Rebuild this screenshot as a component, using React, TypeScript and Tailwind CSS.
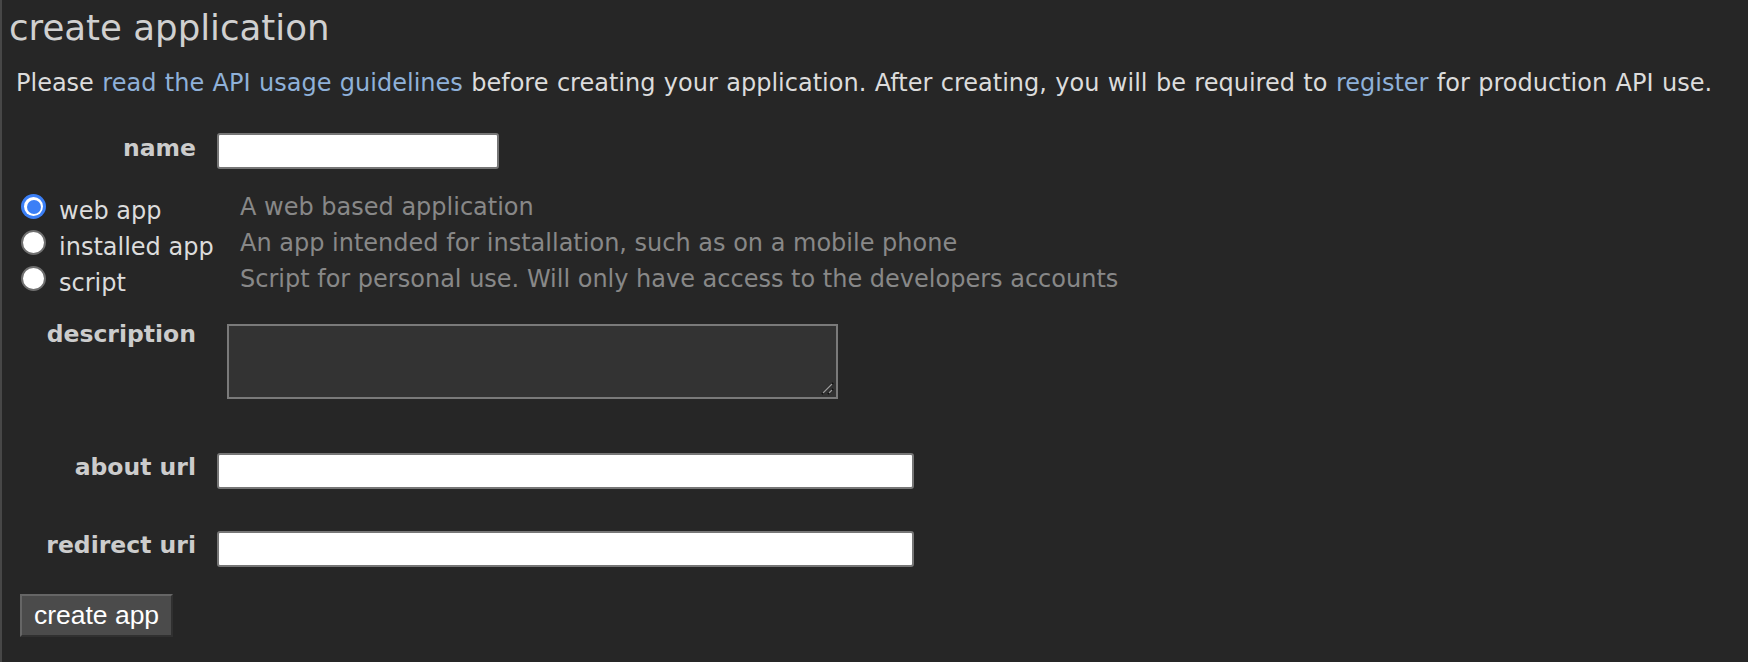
import React from "react";

function Radio({ checked }: { checked?: boolean }) {
  if (checked) {
    return (
      <div className="mt-[3px] flex h-[25px] w-[25px] shrink-0 items-center justify-center rounded-full bg-[#3b7ff6]">
        <div className="flex h-[19px] w-[19px] items-center justify-center rounded-full bg-white">
          <div className="h-[14px] w-[14px] rounded-full bg-[#3b7ff6]" />
        </div>
      </div>
    );
  }
  return <div className="mt-[3px] h-[25px] w-[25px] shrink-0 rounded-full border-2 border-[#6f6f6f] bg-white" />;
}

const kinds = [
  { label: "web app", desc: "A web based application", checked: true },
  { label: "installed app", desc: "An app intended for installation, such as on a mobile phone" },
  { label: "script", desc: "Script for personal use. Will only have access to the developers accounts" },
];

export default function App() {
  return (
    <div className="min-h-screen border-l-2 border-[#474747] bg-[#262626] font-['DejaVu_Sans',sans-serif] text-[#dcdcdc]">
      <h1 className="pl-[7px] pt-[7px] text-[35.6px] font-normal leading-[42px] text-[#d0d0d0]">create application</h1>
      <p className="mt-[19px] pl-[14px] text-[24px] leading-[30px] [word-spacing:0.8px]">
        Please <a className="text-[#8fb1d9]">read the API usage guidelines</a> before creating your application. After
        creating, you will be required to <a className="text-[#8fb1d9]">register</a> for production API use.
      </p>

      <div className="mt-[35px] flex items-start">
        <div className="w-[194px] text-right text-[23.5px] font-bold leading-[30px] text-[#cccccc]">name</div>
        <input className="ml-[21px] h-[36px] w-[282px] rounded-[3px] border-2 border-[#767676] bg-white" />
      </div>

      <div className="mt-[22px] flex pl-[19px]">
        <div className="w-[219px]">
          {kinds.map((k) => (
            <div key={k.label} className="flex h-[36px] items-start">
              <Radio checked={k.checked} />
              <span className="ml-[13px] mt-[5px] text-[24px] leading-[30px] text-[#dcdcdc]">{k.label}</span>
            </div>
          ))}
        </div>
        <div>
          {kinds.map((k) => (
            <div key={k.label} className="h-[36px] pt-[1px] text-[24px] leading-[30px] text-[#888888]">
              {k.desc}
            </div>
          ))}
        </div>
      </div>

      <div className="mt-[20px] flex items-start">
        <div className="w-[194px] text-right text-[23.5px] font-bold leading-[30px] text-[#cccccc]">description</div>
        <div className="relative ml-[31px] mt-[5px] h-[75px] w-[611px]">
          <textarea className="h-full w-full resize-none border-2 border-[#7a7a7a] bg-[#333333]" />
          <svg className="absolute bottom-[4px] right-[4px]" width="14" height="14" viewBox="0 0 14 14">
            <line x1="2" y1="13" x2="13" y2="2" stroke="#111" strokeWidth="2.2" />
            <line x1="3" y1="12" x2="12" y2="3" stroke="#9a9a9a" strokeWidth="1.4" />
            <line x1="8" y1="13" x2="13" y2="8" stroke="#111" strokeWidth="2.2" />
            <line x1="9" y1="12" x2="12" y2="9" stroke="#9a9a9a" strokeWidth="1.4" />
          </svg>
        </div>
      </div>

      <div className="mt-[53px] flex items-start">
        <div className="w-[194px] text-right text-[23.5px] font-bold leading-[30px] text-[#cccccc]">about url</div>
        <input className="ml-[21px] mt-[1px] h-[36px] w-[697px] rounded-[3px] border-2 border-[#767676] bg-white" />
      </div>

      <div className="mt-[41px] flex items-start">
        <div className="w-[194px] text-right text-[23.5px] font-bold leading-[30px] text-[#cccccc]">redirect uri</div>
        <input className="ml-[21px] mt-[1px] h-[36px] w-[697px] rounded-[3px] border-2 border-[#767676] bg-white" />
      </div>

      <div className="mt-[27px] pl-[18px]">
        <button className="h-[43px] w-[153px] border-2 border-b-[#303030] border-l-[#666666] border-r-[#303030] border-t-[#666666] bg-[#4b4b4b] font-['Liberation_Sans',sans-serif] text-[26.5px] leading-none text-white">
          create app
        </button>
      </div>
    </div>
  );
}
